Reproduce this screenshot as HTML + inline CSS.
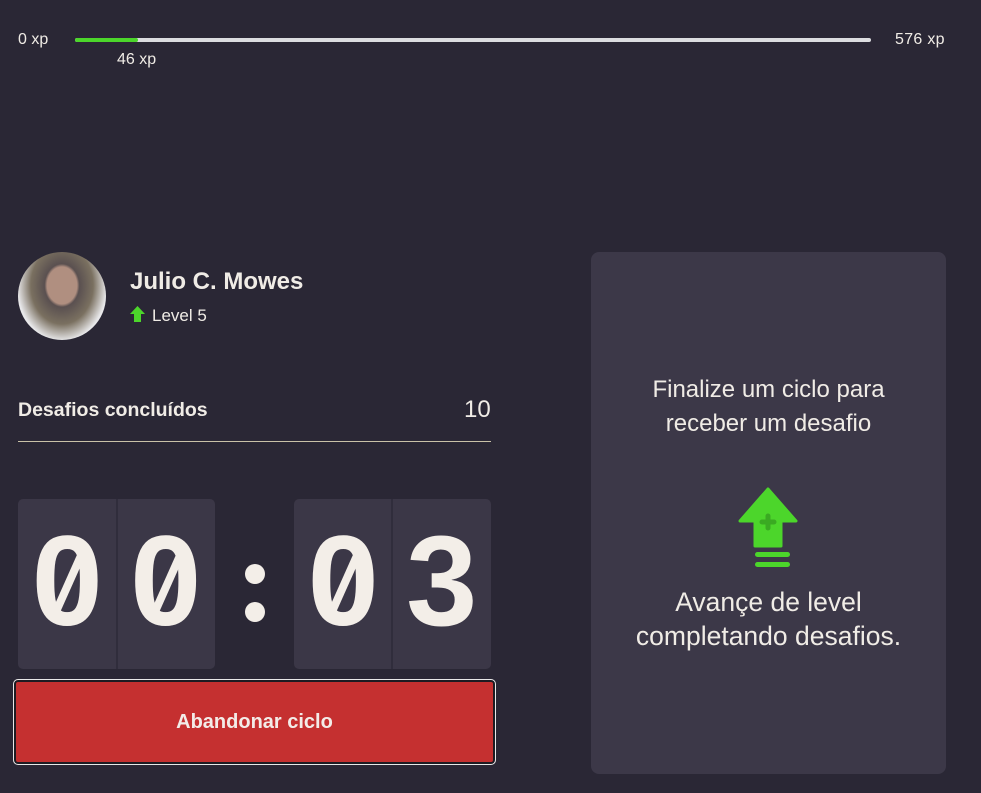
<!DOCTYPE html>
<html><head><meta charset="utf-8"><style>
*{margin:0;padding:0;box-sizing:border-box}
body{width:981px;height:793px;background:#2a2735;font-family:"Liberation Sans",sans-serif;color:#f0ece6;position:relative;overflow:hidden}
.a{position:absolute}
.d{flex:1;text-align:center;position:relative;font-family:"Liberation Sans",sans-serif;font-weight:bold;font-size:128px;line-height:166px;color:#f3eee8}
.s{position:absolute;left:50%;top:50%;width:8px;height:66px;margin:-30px 0 0 -4px;background:#f3eee8;transform:rotate(24deg)}
.dot{position:absolute;width:20px;height:20px;border-radius:50%;background:#f3eee8}
</style></head><body>
<div class="a" style="left:18px;top:31px;font-size:16px">0 xp</div>
<div class="a" style="left:75px;top:38px;width:796px;height:4px;background:#dcdde0;border-radius:2px"></div>
<div class="a" style="left:75px;top:38px;width:63px;height:4px;background:#4cd62b;border-radius:2px"></div>
<div class="a" style="left:117px;top:51px;font-size:16px">46 xp</div>
<div class="a" style="left:895px;top:31px;font-size:16px;letter-spacing:.3px">576 xp</div>

<div class="a" style="left:18px;top:252px;width:88px;height:88px;border-radius:50%;background:radial-gradient(ellipse at 50% 38%,#b08f80 0 24%,#5a5050 28%,#7a7060 50%,#e8e8ea 72%);overflow:hidden"></div>
<div class="a" style="left:130px;top:268px;font-size:24px;font-weight:bold">Julio C. Mowes</div>
<svg class="a" style="left:130px;top:306px" width="15" height="16" viewBox="0 0 15 16"><path d="M7.5 0L15 8H11V16H4V8H0Z" fill="#4cd62b"/></svg>
<div class="a" style="left:152px;top:306px;font-size:17px">Level 5</div>

<div class="a" style="left:18px;top:399px;font-size:19.5px;font-weight:bold">Desafios concluídos</div>
<div class="a" style="left:464px;top:396px;font-size:24px">10</div>
<div class="a" style="left:18px;top:441px;width:473px;height:1px;background:#c9c2a8"></div>

<div class="a" style="left:18px;top:499px;width:197px;height:170px;background:#3b3747;border-radius:5px"></div>
<div class="a" style="left:116px;top:499px;width:2px;height:170px;background:#2a2735;opacity:.6"></div>
<div class="a" style="left:294px;top:499px;width:197px;height:170px;background:#3b3747;border-radius:5px"></div>
<div class="a" style="left:391px;top:499px;width:2px;height:170px;background:#2a2735;opacity:.6"></div>
<div class="a" style="left:18px;top:499px;width:197px;height:170px;display:flex"><span class="d">0<i class="s"></i></span><span class="d">0<i class="s"></i></span></div>
<div class="a" style="left:232px;top:499px;width:46px;height:170px;color:transparent;font-size:20px">:
<i class="dot" style="left:13px;top:65px"></i><i class="dot" style="left:13px;top:103px"></i></div>
<div class="a" style="left:294px;top:499px;width:197px;height:170px;display:flex"><span class="d">0<i class="s"></i></span><span class="d">3</span></div>

<div class="a" style="left:14px;top:680px;width:481px;height:84px;background:#c53030;border:2px solid #1d1b22;outline:1px solid #e8e8e8;border-radius:4px;display:flex;align-items:center;justify-content:center;font-size:20px;font-weight:bold;color:#f3ece8">Abandonar ciclo</div>

<div class="a" style="left:591px;top:252px;width:355px;height:522px;background:#3c3848;border-radius:8px"></div>
<div class="a" style="left:591px;top:373px;width:355px;text-align:center;font-size:24px;line-height:34px">Finalize um ciclo para<br>receber um desafio</div>
<svg class="a" style="left:738px;top:487px" width="60" height="82" viewBox="0 0 60 82"><path d="M30 2L58 34H43V59H17V34H2Z" fill="#4cd62b" stroke="#4cd62b" stroke-width="3" stroke-linejoin="round"/><path d="M30 29v12M24 35h12" stroke="#3aaa22" stroke-width="5" stroke-linecap="round"/><rect x="17" y="65" width="35" height="5" rx="2.5" fill="#4cd62b"/><rect x="17" y="75" width="35" height="5" rx="2.5" fill="#4cd62b"/></svg>
<div class="a" style="left:591px;top:585px;width:355px;text-align:center;font-size:26.5px;line-height:34px">Avançe de level<br>completando desafios.</div>
</body></html>
